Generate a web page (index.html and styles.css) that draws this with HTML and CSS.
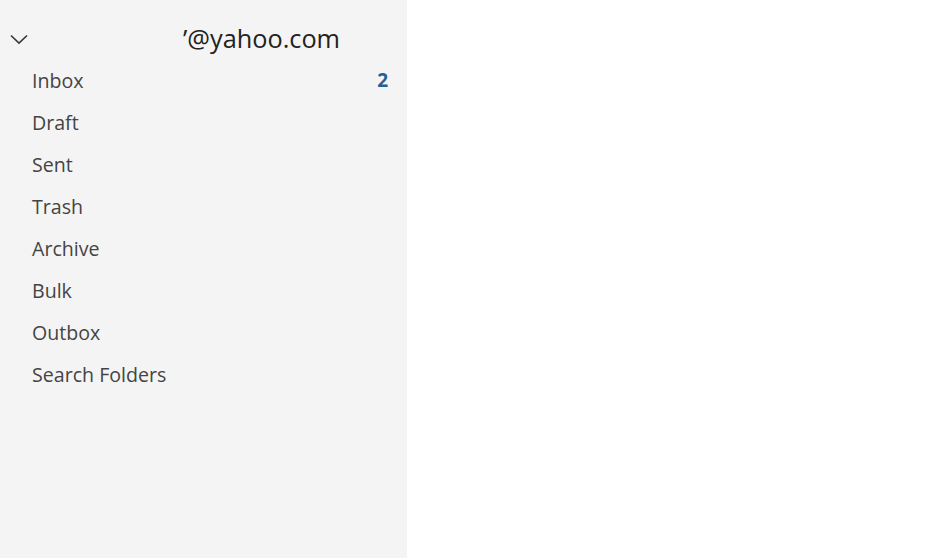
FILE: index.html
```html
<!DOCTYPE html>
<html>
<head>
<meta charset="utf-8">
<link rel="stylesheet" href="styles.css">
</head>
<body>
<div class="app">
  <nav class="sidebar">
    <div class="account">
      <svg class="chev" width="20" height="20" viewBox="0 0 20 20"><path d="M2 6.5 L10 14 L18 6.5" fill="none" stroke="#3a3a3a" stroke-width="1.7"/></svg>
      <span class="email">’@yahoo.com</span>
    </div>
    <ul class="folders">
      <li class="folder"><span>Inbox</span><span class="count">2</span></li>
      <li class="folder"><span>Draft</span></li>
      <li class="folder"><span>Sent</span></li>
      <li class="folder"><span>Trash</span></li>
      <li class="folder"><span>Archive</span></li>
      <li class="folder"><span>Bulk</span></li>
      <li class="folder"><span>Outbox</span></li>
      <li class="folder"><span>Search Folders</span></li>
    </ul>
  </nav>
  <main class="content"></main>
</div>
</body>
</html>
```
FILE: styles.css
```css
html, body { margin: 0; padding: 0; height: 100%; }
body { font-family: "Open Sans", "Noto Sans", sans-serif; background: #fff; }
.app { display: flex; height: 558px; }
.sidebar { width: 407px; background: #f4f4f4; flex: none; }
.content { flex: 1; background: #fff; }
.account { display: flex; align-items: center; height: 38px; padding-top: 20px; padding-bottom: 1px; }
.chev { margin-left: 9px; flex: none; }
.email { margin-left: 154px; font-size: 25.3px; color: #222; margin-top: -2px; }
.folders { list-style: none; margin: 0; padding: 0; }
.folder { display: flex; justify-content: space-between; align-items: center; height: 42px; padding: 0 19px 0 32px; font-size: 19.6px; color: #444; }
.count { color: #23609a; font-weight: 700; font-size: 19px; }
```
